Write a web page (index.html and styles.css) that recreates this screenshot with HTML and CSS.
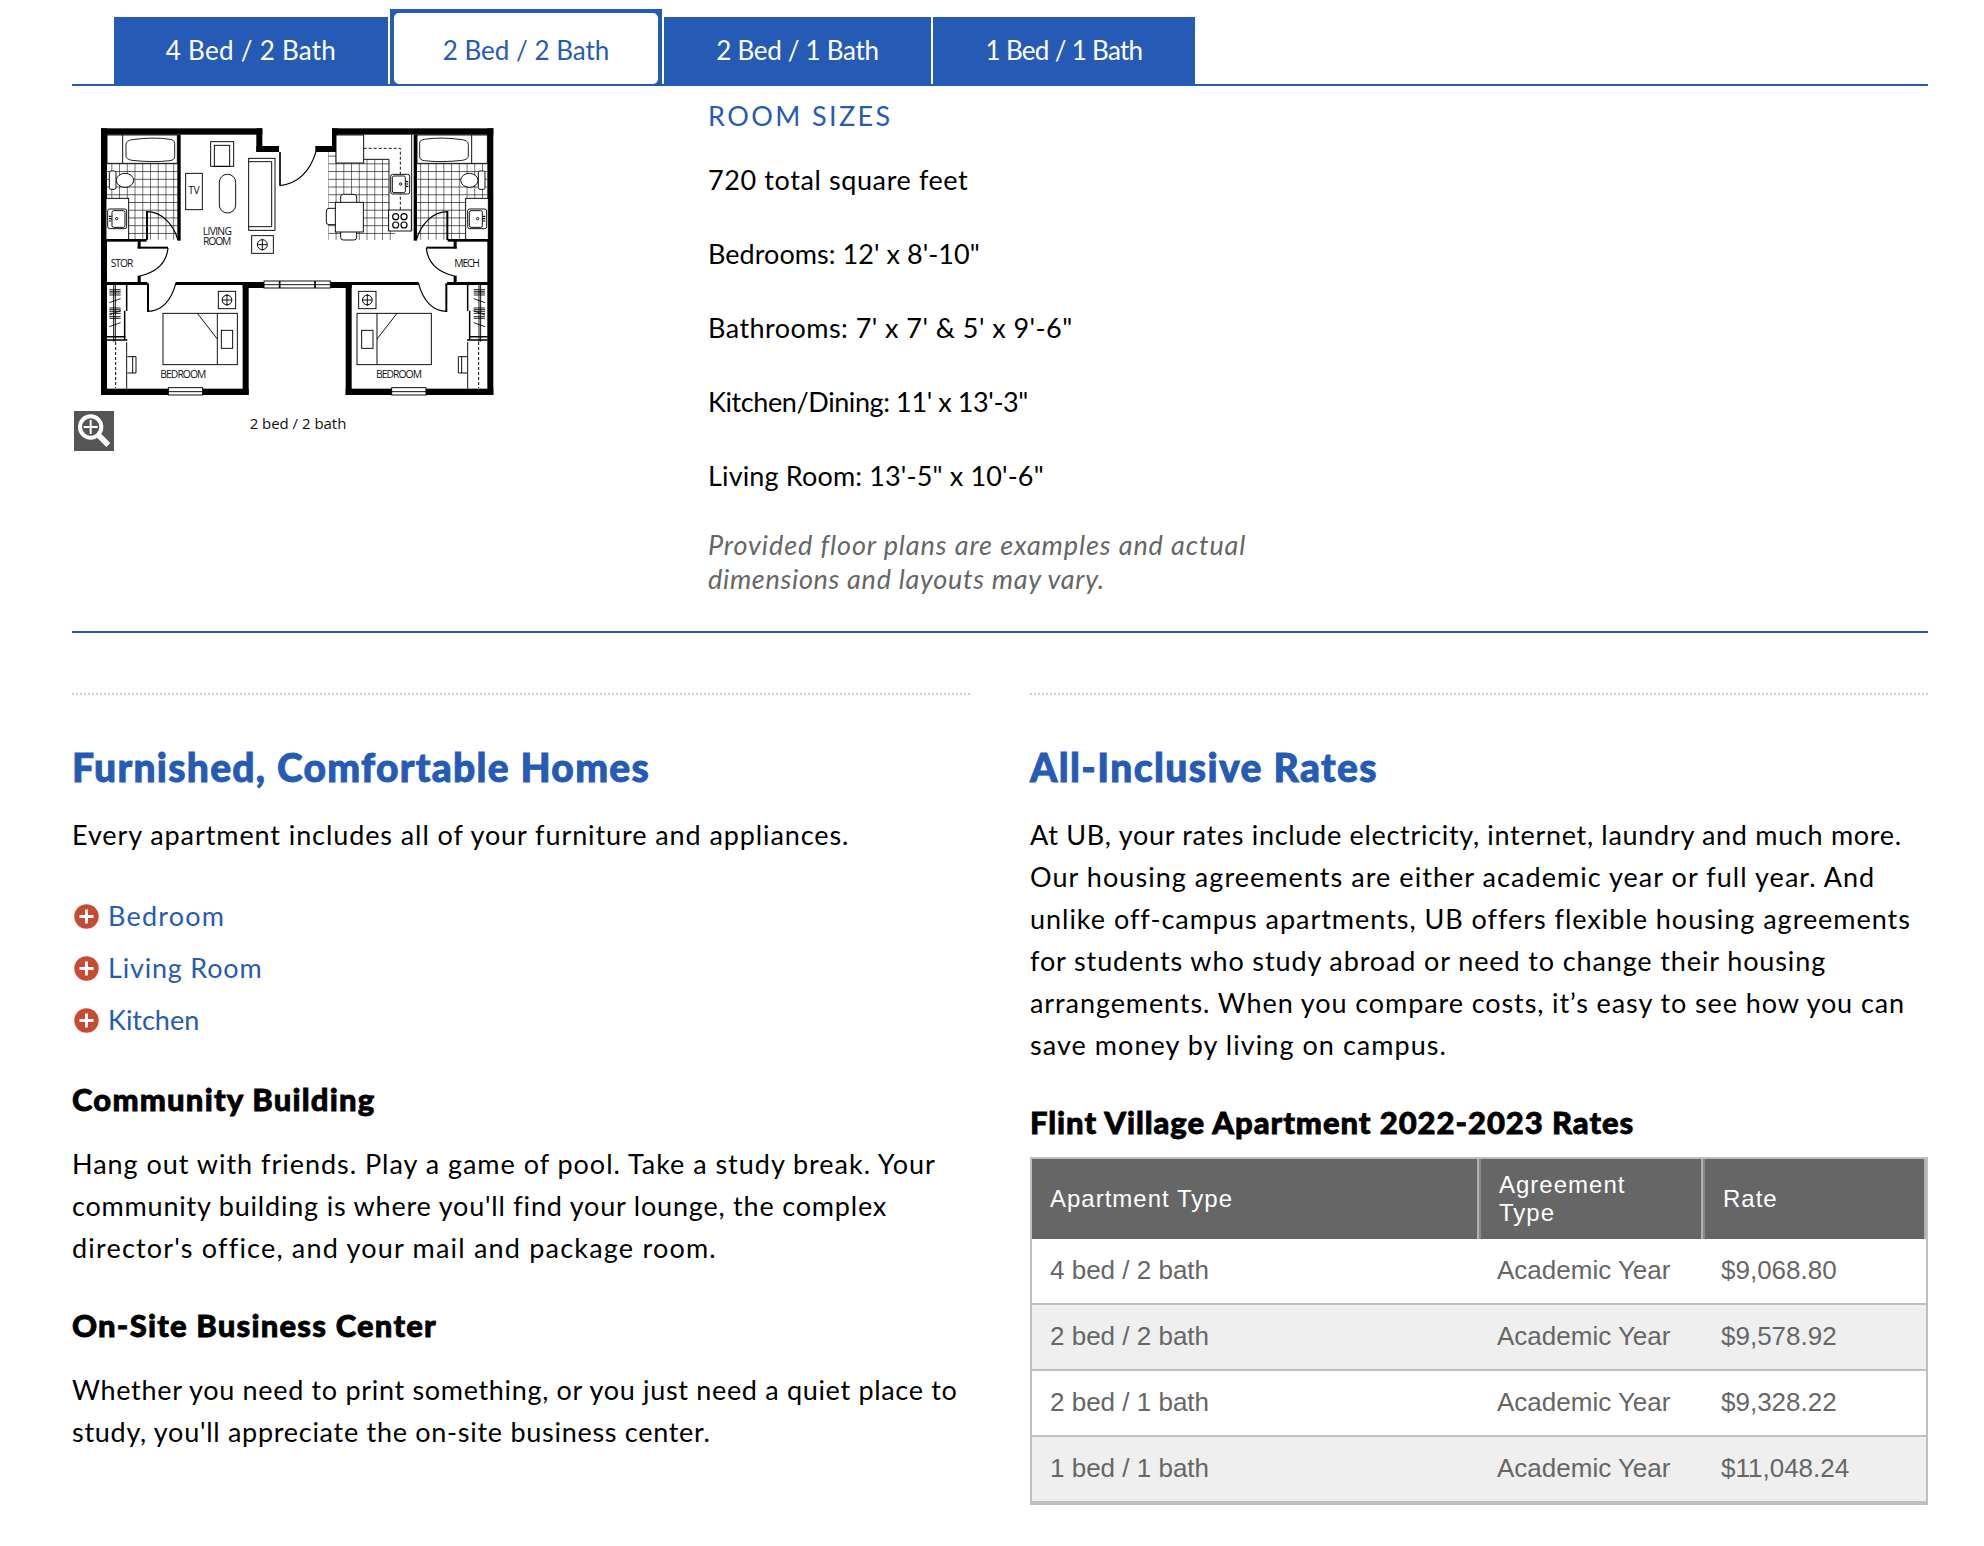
FILE: index.html
```html
<!DOCTYPE html>
<html lang="en">
<head>
<meta charset="utf-8">
<title>Flint Village</title>
<link rel="stylesheet" href="styles.css">
</head>
<body>
<main class="page">
  <nav class="tabs">
    <a class="tab t1">4 Bed / 2 Bath</a>
    <a class="tab t2 active"><span>2 Bed / 2 Bath</span></a>
    <a class="tab t3">2 Bed / 1 Bath</a>
    <a class="tab t4">1 Bed / 1 Bath</a>
  </nav>

  <section class="panel">
    <figure class="plan">
      <svg class="plan-art" width="450" height="360" viewBox="72 86 450 360" fill="none" stroke="#000">
        <defs>
          <pattern id="tile" x="64" y="130" width="23.2" height="23.2" patternUnits="userSpaceOnUse">
            <path d="M0 0H23.2M0 0V23.2" stroke="#222" stroke-width="3.8"/>
          </pattern>
          <g id="sink">
            <rect x="0" y="0" width="57" height="59" rx="6" fill="#fff"/>
            <rect x="13" y="5" width="39" height="50" rx="5"/>
            <circle cx="27" cy="29" r="3.5"/>
            <path d="M4 22h7M4 29h9M4 36h7" stroke-width="3.5"/>
          </g>
          <g id="lamp">
            <rect x="-26" y="-26" width="52" height="52"/>
            <circle r="14.5" stroke-width="3"/>
            <path d="M-14 0H14M0-18V18"/>
          </g>
          <g id="wing">
            <g fill="#000" stroke="none">
              <rect x="33" y="25" width="18" height="800"/>
              <rect x="33" y="25" width="484" height="19"/>
              <rect x="499" y="25" width="18" height="71"/>
              <rect x="499" y="78" width="68" height="18"/>
              <rect x="458" y="486" width="18" height="339"/>
              <rect x="458" y="486" width="64" height="18"/>
              <rect x="33" y="806" width="443" height="19"/>
              <rect x="258" y="486" width="210" height="9"/>
              <rect x="48" y="486" width="124" height="9"/>
            </g>
            <rect x="51" y="130" width="211" height="229" fill="url(#tile)" stroke="none"/>
            <rect x="51" y="45" width="211" height="85" fill="#fff"/>
            <path d="M98 45V130"/>
            <path d="M126 59Q190 50 240 58Q254 60 254 70V110Q254 120 240 122Q190 128 126 121Q108 118 108 108V74Q108 62 126 59Z" stroke-width="2.6"/>
            <rect x="58" y="153" width="20" height="55" rx="5" fill="#fff"/>
            <ellipse cx="105" cy="181" rx="26" ry="21" fill="#fff"/>
            <rect x="48" y="235" width="68" height="124" fill="#fff"/>
            <use href="#sink" x="53" y="267"/>
            <g fill="#000" stroke="none">
              <rect x="262" y="44" width="10" height="318"/>
              <rect x="48" y="357" width="122" height="8"/>
              <rect x="168" y="273" width="6" height="87"/>
              <rect x="143" y="360" width="9" height="25"/>
              <rect x="143" y="380" width="91" height="6"/>
              <rect x="143" y="467" width="9" height="22"/>
              <rect x="171" y="490" width="6" height="86"/>
            </g>
            <path d="M170 275C215 275 250 312 264 360M234 384C230 425 205 455 150 468M173 574C212 574 244 545 258 488" stroke-width="3.6"/>
            <rect x="235" y="803" width="103" height="22" fill="#fff"/>
            <path d="M235 815H338"/>
            <path d="M71 495V665M76 495V665"/>
            <path d="M58 509H92M58 514H92M58 519H92M58 525H92M58 564H92M58 569H92M58 574H92M58 580H92M58 590H92M58 595H92M58 548L92 536M58 585L92 572M58 620L92 608" stroke-width="2.6"/>
            <path d="M110 495V573M104 572V660" stroke-width="4.5"/>
            <path d="M50 650H106M50 660H112" stroke-width="4.5"/>
            <path d="M110 666V806M112 710H138V759H112M128 710V759"/>
            <path d="M77 666V804" stroke-dasharray="9 6" stroke-width="3"/>
            <rect x="219" y="580" width="223" height="154"/>
            <path d="M382 580V734M322 580L382 657"/>
            <rect x="394" y="631" width="34" height="54"/>
            <use href="#lamp" x="411" y="540"/>
          </g>
        </defs>
        <g transform="translate(90 120) scale(.33333)" stroke-width="2.8">
          <rect x="715" y="95" width="200" height="265" fill="url(#tile)" stroke="none"/>
          <use href="#wing"/>
          <use href="#wing" transform="translate(1243 0) scale(-1 1)"/>
          <rect x="522" y="483" width="199" height="21" fill="#fff"/>
          <path d="M522 494H721"/>
          <path d="M569 483V504M675 483V504" stroke-width="5"/>
          <rect x="362" y="65" width="69" height="74"/>
          <rect x="373" y="76" width="46" height="63"/>
          <rect x="287" y="160" width="50" height="109"/>
          <rect x="388" y="163" width="49" height="116" rx="24"/>
          <rect x="476" y="115" width="79" height="216"/>
          <path d="M476 125H545V320H476"/>
          <rect x="485" y="347" width="65" height="53"/>
          <circle cx="517" cy="374" r="15"/>
          <path d="M502 374H532M517 356V392"/>
          <path d="M570 96V197" stroke-width="5"/>
          <path d="M570 197C625 190 660 155 678 95" stroke-width="3.6"/>
          <rect x="897" y="45" width="68" height="288" fill="#fff" stroke="none"/>
          <rect x="821" y="45" width="100" height="73" fill="#fff" stroke="none"/>
          <path d="M821 118H897V333M965 45V333"/>
          <rect x="738" y="45" width="83" height="84" fill="#fff"/>
          <path d="M821 85H931V270" stroke-dasharray="9 6"/>
          <use href="#sink" transform="translate(959 163) scale(-1 1)"/>
          <rect x="896" y="270" width="68" height="63" fill="#fff"/>
          <g stroke-width="3.6"><circle cx="917" cy="290" r="9"/><circle cx="942" cy="290" r="9"/><circle cx="917" cy="315" r="9"/><circle cx="942" cy="315" r="9"/></g>
          <g fill="#fff"><rect x="752" y="223" width="48" height="32" rx="8"/><rect x="752" y="328" width="48" height="32" rx="8"/><rect x="709" y="265" width="34" height="49" rx="8"/><rect x="736" y="247" width="84" height="89"/></g>
          <g class="plan-label">
            <text x="295" y="223" textLength="34">TV</text>
            <text><tspan x="338" y="346" textLength="88">LIVING</tspan><tspan x="339" y="376" textLength="85">ROOM</tspan></text>
            <text x="62" y="442" textLength="68">STOR</text>
            <text x="1093" y="442" textLength="77">MECH</text>
            <text x="211" y="773" textLength="138">BEDROOM</text>
            <text x="858" y="773" textLength="138">BEDROOM</text>
            <text class="plan-caption" x="479" y="926" textLength="290">2 bed / 2 bath</text>
          </g>
        </g>
      </svg>
      <svg class="zoom" width="40" height="40" viewBox="0 0 120 120" fill="none" stroke="#fff">
        <rect width="120" height="120" fill="#555" stroke="none"/>
        <circle cx="50" cy="48" r="32" stroke-width="12"/>
        <path d="M29 48H71M50 27V69" stroke-width="6"/>
        <path d="M73 72L103 102" stroke-width="17"/>
      </svg>
    </figure>
    <div class="sizes">
      <h3>ROOM SIZES</h3>
      <p class="k60">720 total square feet</p>
      <p class="k5">Bedrooms: 12' x 8'-10"</p>
      <p class="k45">Bathrooms: 7' x 7' &amp; 5' x 9'-6"</p>
      <p class="k-40">Kitchen/Dining: 11' x 13'-3"</p>
      <p class="k15">Living Room: 13'-5" x 10'-6"</p>
      <p class="note"><span class="k90">Provided floor plans are examples and actual</span><br><span class="k70">dimensions and layouts may vary.</span></p>
    </div>
  </section>

  <div class="columns">
    <section class="col">
      <h2>Furnished, Comfortable Homes</h2>
      <p class="k90">Every apartment includes all of your furniture and appliances.</p>
      <ul class="more">
        <li><svg width="25" height="25" viewBox="0 0 25 25"><circle cx="12.5" cy="12.5" r="12.2"/><path d="M5.5 12.5H19.5M12.5 5.5V19.5"/></svg><a class="k120">Bedroom</a></li>
        <li><svg width="25" height="25" viewBox="0 0 25 25"><circle cx="12.5" cy="12.5" r="12.2"/><path d="M5.5 12.5H19.5M12.5 5.5V19.5"/></svg><a class="k80">Living Room</a></li>
        <li><svg width="25" height="25" viewBox="0 0 25 25"><circle cx="12.5" cy="12.5" r="12.2"/><path d="M5.5 12.5H19.5M12.5 5.5V19.5"/></svg><a>Kitchen</a></li>
      </ul>
      <h3>Community Building</h3>
      <p><span class="k98">Hang out with friends. Play a game of pool. Take a study break. Your</span><br><span class="k80">community building is where you'll find your lounge, the complex</span><br><span class="k120">director's office, and your mail and package room.</span></p>
      <h3 class="next">On-Site Business Center</h3>
      <p><span class="k68">Whether you need to print something, or you just need a quiet place to</span><br><span class="k72">study, you'll appreciate the on-site business center.</span></p>
    </section>
    <section class="col">
      <h2 class="tight">All-Inclusive Rates</h2>
      <p><span class="k70">At UB, your rates include electricity, internet, laundry and much more.</span><br><span class="k105">Our housing agreements are either academic year or full year. And</span><br><span class="k98">unlike off-campus apartments, UB offers flexible housing agreements</span><br><span class="k88">for students who study abroad or need to change their housing</span><br><span class="k90">arrangements. When you compare costs, it’s easy to see how you can</span><br><span class="k105">save money by living on campus.</span></p>
      <h3 class="next rates-title">Flint Village Apartment 2022-2023 Rates</h3>
      <table class="rates">
        <thead><tr><th>Apartment Type</th><th>Agreement<br>Type</th><th>Rate</th></tr></thead>
        <tbody>
          <tr><td>4 bed / 2 bath</td><td>Academic Year</td><td>$9,068.80</td></tr>
          <tr><td>2 bed / 2 bath</td><td>Academic Year</td><td>$9,578.92</td></tr>
          <tr><td>2 bed / 1 bath</td><td>Academic Year</td><td>$9,328.22</td></tr>
          <tr><td>1 bed / 1 bath</td><td>Academic Year</td><td>$11,048.24</td></tr>
        </tbody>
      </table>
    </section>
  </div>
</main>
</body>
</html>
```
FILE: styles.css
```css
* { box-sizing: border-box; margin: 0; padding: 0; }
body { background: #fff; color: #000; font: 27px/42px Lato, sans-serif; }
.page { width: 1856px; margin-left: 72px; padding-top: 9px; }

/* tracking steps, in hundredths of a pixel */
.k-40 { letter-spacing: -.4px; }
.k5 { letter-spacing: .05px; }
.k15 { letter-spacing: .15px; }
.k45 { letter-spacing: .45px; }
.k60 { letter-spacing: .6px; }
.k68 { letter-spacing: .68px; }
.k70 { letter-spacing: .7px; }
.k72 { letter-spacing: .72px; }
.k80 { letter-spacing: .8px; }
.k88 { letter-spacing: .88px; }
.k90 { letter-spacing: .91px; }
.k98 { letter-spacing: .975px; }
.k105 { letter-spacing: 1.05px; }
.k120 { letter-spacing: 1.2px; }

.tabs { display: flex; align-items: flex-end; height: 77px; padding-left: 42px; border-bottom: 2px solid #255bb5; }
.tab { height: 67px; padding-top: 1px; margin-right: 2px; background: #255bb5; color: #fff; text-align: center; font-size: 26px; line-height: 64px; white-space: nowrap; }
.t1 { width: 274px; letter-spacing: .26px; }
.t2 { width: 272px; }
.t3 { width: 267px; letter-spacing: -.3px; }
.t4 { width: 262px; letter-spacing: -.7px; }
.tab.active { height: 77px; margin-bottom: -2px; padding: 4px 4px 2px; color: #255bb5; }
.tab.active span { display: block; height: 71px; padding-top: 5px; border-radius: 5px; background: #fff; }

.panel { display: grid; grid-template-columns: 636px 1fr; height: 547px; border-bottom: 2px solid #255bb5; }
.plan { position: relative; }
.plan-art { display: block; }
.plan-label { fill: #111; stroke: none; font: 31px "Open Sans", sans-serif; }
.plan-caption { font-size: 45px; }
.zoom { position: absolute; left: 2px; top: 325px; }
.sizes { padding-top: 13px; }
.sizes h3 { margin-bottom: 26px; color: #255bb5; font-size: 27px; font-weight: 400; line-height: 34px; letter-spacing: 2.4px; }
.sizes p { margin-bottom: 32px; }
.sizes .note { margin-top: -1px; color: #666; font-style: italic; line-height: 34px; }

.columns { display: grid; grid-template-columns: 898px 898px; column-gap: 60px; padding-top: 60px; }
.col { padding-top: 51px; background: repeating-linear-gradient(90deg, #ccc 0 2px, transparent 2px 4px) 0 0 / 100% 2px no-repeat; white-space: nowrap; }
.col h2 { margin-bottom: 24px; color: #255bb5; font-size: 39px; font-weight: 900; line-height: 46px; letter-spacing: 1.28px; -webkit-text-stroke: .9px; }
.col h2.tight { letter-spacing: 1.4px; }
.col h3 { margin: 34px 0 26px; font-size: 31px; font-weight: 900; line-height: 36px; letter-spacing: 1.2px; -webkit-text-stroke: .8px; }
.col h3.next { margin-top: 38px; }
.col h3.rates-title { margin-bottom: 17px; letter-spacing: .95px; }
.more { margin-top: 34px; list-style: none; }
.more li { display: flex; align-items: center; gap: 9px; height: 52.2px; padding-left: 2px; color: #255bb5; }
.more circle { fill: #c94a32; }
.more path { stroke: #fff; stroke-width: 3; }

.rates { width: 898px; table-layout: fixed; border: 2px solid #bfbfbf; border-spacing: 0; font-family: "Liberation Sans", Arial, sans-serif; color: #666; }
.rates th { height: 80px; padding-left: 18px; background: #666; border-left: 2px solid #888; border-right: 2px solid #b0b0b0; color: #fff; font-size: 24px; font-weight: 400; line-height: 28px; letter-spacing: 1px; text-align: left; }
.rates th:first-child { width: 447px; border-left: 0; }
.rates th:nth-child(2) { width: 224px; }
.rates td { height: 66px; padding: 0 0 2px 18px; border-bottom: 2px solid #bfbfbf; font-size: 26px; line-height: 30px; }
.rates tbody tr:nth-child(even) { background: #efefef; }
```
